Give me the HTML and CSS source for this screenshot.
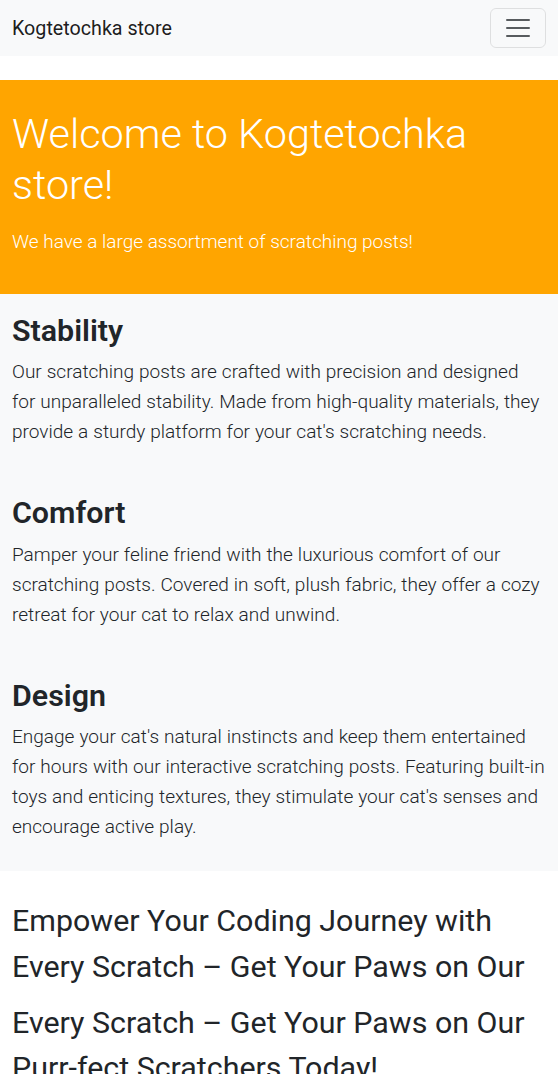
FILE: index.html
```html
<!DOCTYPE html>
<html lang="en">
<head>
<meta charset="utf-8">
<title>Kogtetochka store</title>
<link rel="stylesheet" href="styles.css">
</head>
<body>
<nav class="navbar">
  <a class="brand" href="#">Kogtetochka store</a>
  <button class="toggler" type="button" aria-label="Toggle navigation">
    <svg class="toggler-icon" viewBox="0 0 30 30" width="30" height="30">
      <path d="M4 7h22M4 15h22M4 23h22" stroke="rgba(33,37,41,0.75)" stroke-width="2" stroke-linecap="round" fill="none"/>
    </svg>
  </button>
</nav>

<header class="hero">
  <h1 class="hero-title">Welcome to Kogtetochka store!</h1>
  <p class="hero-lead">We have a large assortment of scratching posts!</p>
</header>

<section class="features">
  <div class="feature">
    <h2 class="feature-title">Stability</h2>
    <p class="feature-text">Our scratching posts are crafted with precision and designed for unparalleled stability. Made from high-quality materials, they provide a sturdy platform for your cat's scratching needs.</p>
  </div>
  <div class="feature">
    <h2 class="feature-title">Comfort</h2>
    <p class="feature-text">Pamper your feline friend with the luxurious comfort of our scratching posts. Covered in soft, plush fabric, they offer a cozy retreat for your cat to relax and unwind.</p>
  </div>
  <div class="feature">
    <h2 class="feature-title">Design</h2>
    <p class="feature-text">Engage your cat's natural instincts and keep them entertained for hours with our interactive scratching posts. Featuring built-in toys and enticing textures, they stimulate your cat's senses and encourage active play.</p>
  </div>
</section>

<section class="slogan">
  <p class="slogan-line">Empower Your Coding Journey with Every Scratch – Get Your Paws on Our</p>
  <p class="slogan-line">Every Scratch – Get Your Paws on Our Purr-fect Scratchers Today!</p>
</section>
</body>
</html>
```
FILE: styles.css
```css
* { box-sizing: border-box; }

html, body {
  margin: 0;
  padding: 0;
}

body {
  font-family: Roboto, "Liberation Sans", sans-serif;
  color: #212529;
  background: #fff;
}

.navbar {
  display: flex;
  align-items: center;
  justify-content: space-between;
  height: 56px;
  padding: 8px 12px;
  background: #f8f9fa;
}

.brand {
  display: block;
  padding: 6px 0 4px;
  font-size: 19.7px;
  line-height: 30px;
  color: rgba(0, 0, 0, 0.9);
  text-decoration: none;
}

.toggler {
  display: flex;
  align-items: center;
  justify-content: center;
  width: 56px;
  height: 40px;
  padding: 4px 12px;
  background: transparent;
  border: 1px solid rgba(0, 0, 0, 0.1);
  border-radius: 6px;
}

.toggler-icon {
  display: block;
  width: 30px;
  height: 30px;
}

.hero {
  margin-top: 24px;
  padding: 29px 12px 37px;
  background: #ffa500;
  color: #fff;
}

.hero-title {
  margin: 0 0 15px;
  font-size: 41.4px;
  font-weight: 300;
  line-height: 51.4px;
}

.hero-lead {
  margin: 0;
  font-size: 19px;
  font-weight: 300;
  line-height: 30px;
}

.features {
  display: flex;
  flex-direction: column;
  gap: 32px;
  padding: 19px 12px 13px;
  background: #f8f9fa;
}

.feature-title {
  margin: 0 0 8px;
  font-size: 30.4px;
  font-weight: 600;
  line-height: 36.5px;
  color: #212529;
}

.feature-text {
  margin: 0 0 16px;
  font-size: 19.05px;
  font-weight: 300;
  line-height: 30px;
  word-spacing: 0.3px;
  color: #212529;
}

.slogan {
  padding: 27px 12px 0;
}

.slogan-line {
  margin: 0 0 10px;
  font-size: 30.4px;
  font-weight: 400;
  line-height: 45.6px;
  color: #212529;
}
```
